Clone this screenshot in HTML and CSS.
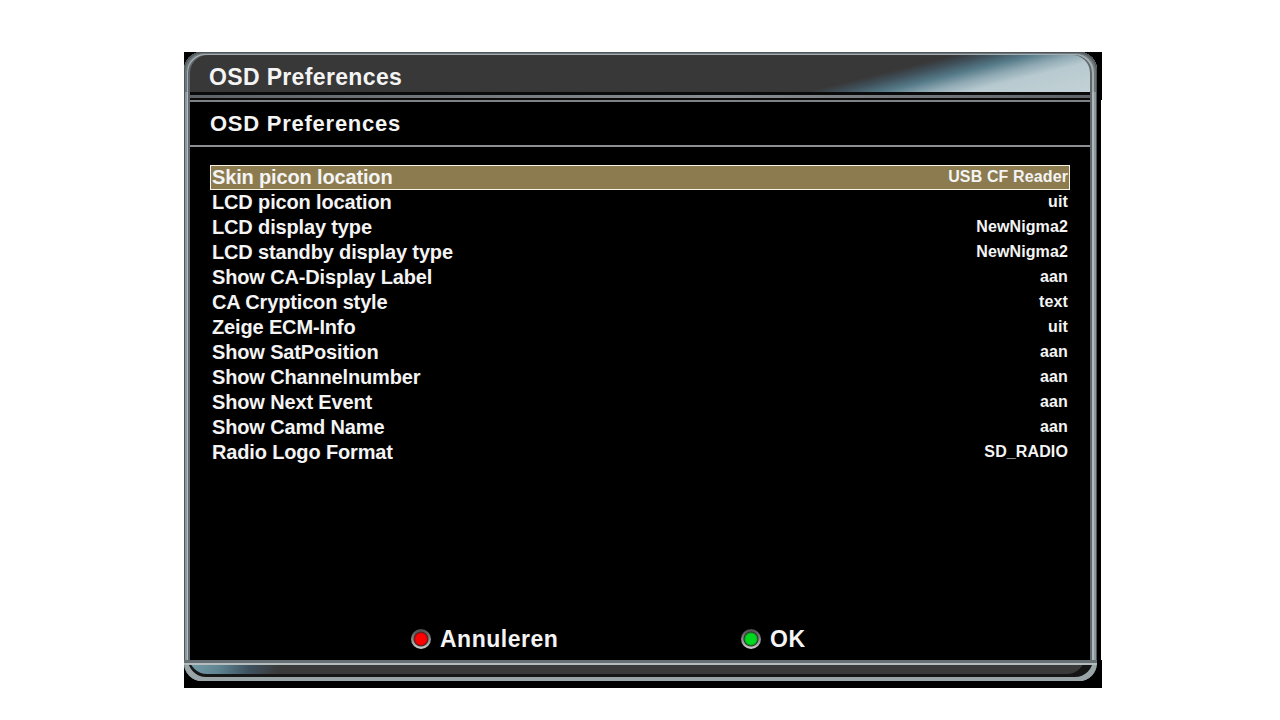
FILE: index.html

```html
<!DOCTYPE html>
<html lang="nl">
<head>
<meta charset="UTF-8">
<title>OSD Preferences</title>
<link rel="stylesheet" href="styles.css">
</head>
<body>

<div class="screen">
    <div class="head">
        <div class="head-panel">OSD Preferences</div>
        <div class="head-rule"></div>
    </div>

    <div class="main">
        <div class="frame">
            <div class="content">
                <h1 class="page-title">OSD Preferences</h1>

                <ul class="settings">
                    <li class="row selected"><span class="name">Skin picon location</span><span class="value">USB CF Reader</span></li>
                    <li class="row"><span class="name">LCD picon location</span><span class="value">uit</span></li>
                    <li class="row"><span class="name">LCD display type</span><span class="value">NewNigma2</span></li>
                    <li class="row"><span class="name">LCD standby display type</span><span class="value">NewNigma2</span></li>
                    <li class="row"><span class="name">Show CA-Display Label</span><span class="value">aan</span></li>
                    <li class="row"><span class="name">CA Crypticon style</span><span class="value">text</span></li>
                    <li class="row"><span class="name">Zeige ECM-Info</span><span class="value">uit</span></li>
                    <li class="row"><span class="name">Show SatPosition</span><span class="value">aan</span></li>
                    <li class="row"><span class="name">Show Channelnumber</span><span class="value">aan</span></li>
                    <li class="row"><span class="name">Show Next Event</span><span class="value">aan</span></li>
                    <li class="row"><span class="name">Show Camd Name</span><span class="value">aan</span></li>
                    <li class="row"><span class="name">Radio Logo Format</span><span class="value">SD_RADIO</span></li>
                </ul>

                <div class="buttons">
                    <div class="button"><span class="dot dot-red"></span>Annuleren</div>
                    <div class="button"><span class="dot dot-green"></span>OK</div>
                </div>
            </div>
        </div>
    </div>

    <div class="foot">
        <div class="foot-panel"></div>
    </div>
</div>

</body>
</html>
```

FILE: styles.css

```css
* { box-sizing: border-box; }
body { margin: 0; background: #fff; font-family: "Liberation Sans", Arial, sans-serif; color: #f4f4f4; }

.screen { width: 918px; height: 636px; margin: 52px 0 0 184px; }

.head { height: 48px; padding-right: 5px; background: #000; }
.head-panel {
    height: 40px;
    padding: 13px 0 0 25px;
    border-radius: 18px 18px 0 0;
    font-size: 23px;
    font-weight: bold;
    letter-spacing: 0.35px;
    line-height: 24px;
    background: linear-gradient(166deg, #383838 73%, #3f505a 76%, #557a88 80%, #8fa9b3 84%, #b8cad0 88%, #c4d2d6 100%);
    box-shadow: inset 1px 1px 0 #4e5659, inset -1px 1px 0 #4e5659, inset 3px 2px 0 #6d777b, inset -3px 2px 0 #6d777b, inset 4px 3px 0 #a4adb0, inset -5px 3px 0 #a4adb0, inset 6px 3px 0 #5f686c, inset -7px 3px 0 #5f686c;
}
.head-rule {
    height: 8px;
    background: linear-gradient(90deg, #5c6265, #878d90 60%, #5c6265) 0 3px / 100% 3px no-repeat, #0a0a0a;
    box-shadow: inset 1px 0 0 #4e5659, inset 3px 0 0 #8d989c, inset 4px 0 0 #b4bcbf, inset 6px 0 0 #5f686c, inset -1px 0 0 #4e5659, inset -3px 0 0 #8d989c, inset -5px 0 0 #b0b8bb, inset -7px 0 0 #5f686c;
}

.main { height: 560px; margin-right: 1px; padding-right: 4px; background: #000; }
.frame {
    height: 100%;
    padding: 0 7px 0 6px;
    box-shadow: inset 1px 0 0 #4e5659, inset 3px 0 0 #8d989c, inset 4px 0 0 #b4bcbf, inset 6px 0 0 #5f686c, inset -1px 0 0 #4e5659, inset -3px 0 0 #8d989c, inset -5px 0 0 #b0b8bb, inset -7px 0 0 #5f686c;
}
.content { display: flex; flex-direction: column; height: 100%; border-top: 2px solid #7d8385; background: #000; }

.page-title {
    height: 45px;
    margin: 0;
    padding: 10px 0 0 20px;
    border-bottom: 2px solid #8a8f91;
    font-size: 22px;
    letter-spacing: 0.75px;
    line-height: 24px;
}

.settings { margin: 18px 20px 0; padding: 0; list-style: none; }
.row { display: flex; justify-content: space-between; align-items: center; height: 25px; padding: 0 2px; }
.name { font-size: 20px; font-weight: bold; letter-spacing: -0.15px; }
.value { position: relative; top: -1px; font-size: 16px; font-weight: bold; letter-spacing: 0.12px; }
.selected { background: #8b7b4f; box-shadow: inset 0 0 0 1px #f5f2e0; }

.buttons { display: grid; grid-template-columns: 330px 330px; height: 42px; margin-top: auto; padding-left: 221px; }
.button { display: flex; align-items: center; gap: 9px; font-size: 23px; font-weight: bold; letter-spacing: 0.5px; }
.dot { width: 20px; height: 20px; border-radius: 50%; }
.dot-red { background: radial-gradient(circle, #ff0000 0 5px, #d40000 6px, #333 7px, transparent 8px), linear-gradient(#4a4a4a, #8a8a8a 50%, #d0d0d0); }
.dot-green { background: radial-gradient(circle, #00d820 0 5px, #00a818 6px, #333 7px, transparent 8px), linear-gradient(#4a4a4a, #8a8a8a 50%, #d0d0d0); }

.foot { height: 28px; padding-right: 5px; background: #000; }
.foot-panel {
    height: 21px;
    border-radius: 0 0 18px 18px;
    background: linear-gradient(100deg, #7ba0ac 0, #5f8592 35px, #3f5260 65px, #3a3a3a 95px);
    box-shadow: inset 0 3px 0 #667074, inset 0 5px 0 #b5bcbe, inset 4px -4px 0 #9aa5a8, inset -4px -4px 0 #9aa5a8, inset 5px -7px 0 #161616, inset -12px -7px 0 #161616;
}
```
